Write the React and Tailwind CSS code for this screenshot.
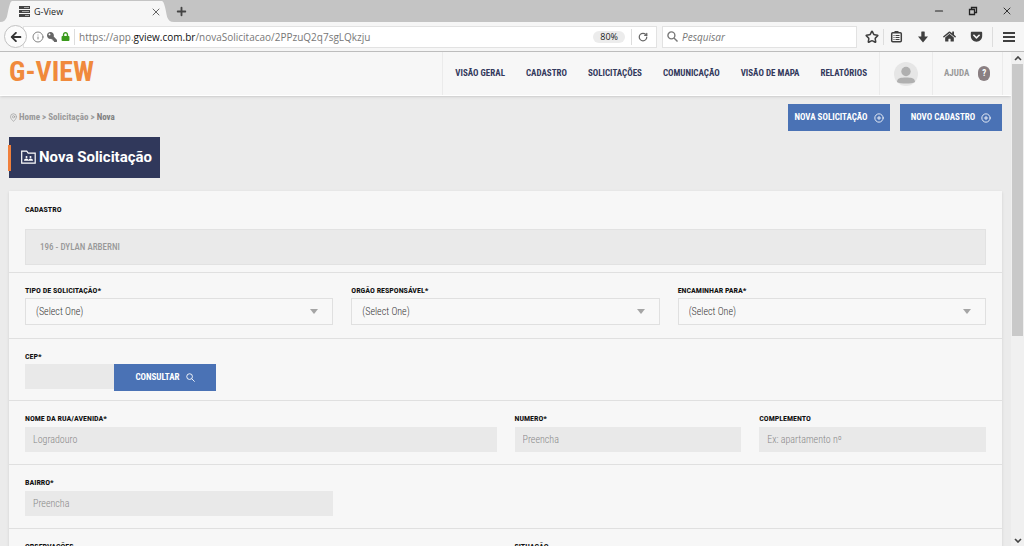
import React from "react";
import { FaArrowLeft, FaLock, FaHome, FaGetPocket, FaKey } from "react-icons/fa";
import { Info, X, Plus, RotateCw, Star, MapPin, CirclePlus, Minus } from "lucide-react";

const ui = "font-['Open_Sans','Noto_Sans',sans-serif]";
const narrow = "font-['Roboto_Condensed','Liberation_Sans_Narrow',Roboto,sans-serif]";

function Magnifier({ size = 12, strokeWidth = 1.2 }) {
  return (
    <svg width={size} height={size} viewBox="0 0 12 12" fill="none" stroke="currentColor" strokeWidth={strokeWidth} className="shrink-0" aria-hidden="true">
      <circle cx="4.800" cy="4.800" r="3.800" />
      <path d="M7.600 7.600L11.500 11.500" />
    </svg>
  );
}

function BrowserTabs() {
  return (
    <div className="flex h-[22px] shrink-0 items-stretch bg-[#c4c4c4]">
      <div className="flex w-[174px] items-stretch">
        <svg className="h-[22px] w-3 shrink-0" viewBox="0 0 12 22" aria-hidden="true">
          <path d="M0 22C8 22 7 14 9 7C10 3 11 1 12 1V22Z" fill="#f6f6f6" />
        </svg>
        <div className="mt-px flex flex-1 items-center bg-[#f6f6f6] pl-[7px]">
          <svg className="size-[11px]" viewBox="0 0 11 11" aria-hidden="true">
            <path d="M0 0h11v3H0zM0 4h11v3H0zM0 8h11v3H0z" fill="#444" />
            <path d="M5 1h5v1H5zM3 5h7v1H3zM6 9h4v1H6z" fill="#aaa" />
          </svg>
          <span className="ml-1 flex-1 text-[9px] leading-none text-[#222]">G-View</span>
          <button type="button" aria-label="Fechar aba" className="text-[#555]">
            <X size={12} strokeWidth={1.8} />
          </button>
        </div>
        <svg className="h-[22px] w-3 shrink-0" viewBox="0 0 12 22" aria-hidden="true">
          <path d="M12 22C4 22 5 14 3 7C2 3 1 1 0 1V22Z" fill="#f6f6f6" />
        </svg>
      </div>
      <button type="button" aria-label="Nova aba" className="px-px text-[#444]">
        <Plus size={13} strokeWidth={3.4} />
      </button>
      <div className="ml-auto flex items-center gap-[22px] pr-[11px] text-[#222]">
        <button type="button" aria-label="Minimizar"><Minus size={12} strokeWidth={2.4} /></button>
        <button type="button" aria-label="Restaurar">
          <svg className="size-3" viewBox="0 0 12 12" fill="none" stroke="currentColor" aria-hidden="true">
            <path d="M2.5 4.5h5v5h-5zM4.5 4V2.5h5v5H8" strokeWidth="1.3" />
          </svg>
        </button>
        <button type="button" aria-label="Fechar"><X size={12} strokeWidth={1.8} /></button>
      </div>
    </div>
  );
}

function BrowserToolbar() {
  return (
    <div className="flex h-[30px] shrink-0 items-center border-b border-[#bdbdbd] bg-[#f6f6f6] pl-1">
      <button type="button" aria-label="Voltar" className="z-10 flex size-[23px] items-center justify-center rounded-full border border-[#c2c2c2] bg-[#fbfbfb] text-[#333]">
        <FaArrowLeft size={12} />
      </button>
      <div className="-ml-1 flex h-[22px] min-w-0 flex-1 items-center border border-[#e2e2e2] bg-white pl-2">
        <Info size={12} strokeWidth={1.8} className="text-[#777]" />
        <FaKey size={10} className="ml-[3px] -scale-x-100 text-[#666]" />
        <FaLock size={9} className="ml-1 text-[#3a9a1c]" />
        <span className="ml-1 h-4 w-px bg-[#ddd]" />
        <div className="ml-1 flex-1 truncate text-[10px] leading-4 text-[#777]">
          https://app.<span className="text-[#111]">gview.com.br</span>/novaSolicitacao/2PPzuQ2q7sgLQkzju
        </div>
        <button type="button" className="rounded-full bg-[#ececec] px-[7px] text-[9px] leading-3 text-[#222]">80%</button>
        <span className="mx-[6px] h-4 w-px bg-[#ddd]" />
        <button type="button" aria-label="Recarregar" className="mr-2 text-[#666]"><RotateCw size={10} strokeWidth={3} /></button>
      </div>
      <label className="ml-[5px] flex h-[22px] w-[195px] items-center border border-[#e2e2e2] bg-white pl-1 text-[#777]">
        <Magnifier size={11} strokeWidth={1.5} />
        <input aria-label="Pesquisar" placeholder="Pesquisar" className="ml-1 w-full bg-transparent text-[10px] italic leading-4 outline-none placeholder:text-[#777]" />
      </label>
      <div className="flex items-center pl-2 text-[#3f3f3f]">
        <button type="button" aria-label="Favoritos"><Star size={14} strokeWidth={2.6} /></button>
        <span className="ml-1 h-4 w-px bg-[#ddd]" />
        <button type="button" aria-label="Biblioteca" className="ml-[6px]">
          <svg className="size-[13px]" viewBox="0 0 13 13" fill="none" stroke="currentColor" aria-hidden="true">
            <rect x="1.7" y="2.7" width="9.6" height="9" rx="1" strokeWidth="1.5" />
            <path d="M4.5 1.5h4M3.5 5.5h1M3.5 7.5h1M3.5 9.5h1M5.5 5.5h4M5.5 7.5h4M5.5 9.5h4" strokeWidth="1.2" />
          </svg>
        </button>
        <button type="button" aria-label="Downloads" className="ml-[14px]">
          <svg className="size-3" viewBox="0 0 12 12" fill="currentColor" aria-hidden="true">
            <path d="M4.300 1Q4.300 .5 4.800 .5H7.200Q7.700 .5 7.700 1V5.500H11L6 11.500L1 5.500H4.300Z" />
          </svg>
        </button>
        <button type="button" aria-label="Início" className="ml-[14px]"><FaHome size={13} /></button>
        <button type="button" aria-label="Pocket" className="ml-[14px]"><FaGetPocket size={13} /></button>
        <span className="ml-[9px] h-5 w-px bg-[#ddd]" />
        <button type="button" aria-label="Menu" className="mr-[9px] ml-[10px]">
          <svg className="size-3" viewBox="0 0 12 12" fill="currentColor" aria-hidden="true">
            <path d="M0 1h12v2H0zM0 5h12v2H0zM0 9h12v2H0z" />
          </svg>
        </button>
      </div>
    </div>
  );
}

const links = ["VISÃO GERAL", "CADASTRO", "SOLICITAÇÕES", "COMUNICAÇÃO", "VISÃO DE MAPA", "RELATÓRIOS"];

function Header() {
  return (
    <header className="flex h-[44px] items-stretch border-b border-white bg-[#f7f7f7] pr-2 pl-[9px] shadow-sm">
      <a href="#home" className={`${narrow} self-start text-[28px] leading-[40px] font-bold text-[#f08a3c]`}>G-VIEW</a>
      <nav className={`${narrow} ml-auto flex items-center gap-[21px] border-l border-[#ebebeb] px-3 text-[9px] font-bold text-[#33395c]`}>
        {links.map((l) => <a key={l} href="#nav" className="whitespace-nowrap">{l}</a>)}
      </nav>
      <button type="button" aria-label="Perfil" className="flex w-[54px] items-center justify-center border-x border-[#ebebeb]">
        <svg className="size-6" viewBox="0 0 24 24" aria-hidden="true">
          <circle cx="12" cy="12" r="12" fill="#e6e6e6" />
          <circle cx="12" cy="9.5" r="4.7" fill="#b0b0b0" />
          <path d="M3 20c0-4 4-4.500 9-4.500s9 .5 9 4.500c-3 2-15 2-18 0Z" fill="#b0b0b0" />
        </svg>
      </button>
      <a href="#ajuda" className={`${narrow} flex w-[70px] items-center gap-[9px] border-r border-[#ebebeb] pl-[11px] text-[9px] font-bold text-[#999]`}>
        AJUDA
        <span className="flex h-[15px] w-3 items-center justify-center rounded-full bg-[#8a7f82] text-white">?</span>
      </a>
    </header>
  );
}

function ActionButton({ children, icon, type = "button" }) {
  return (
    <button type={type} className={`${narrow} flex h-[27px] w-[102px] shrink-0 items-center justify-center gap-[6px] bg-[#4a72b5] text-[9px] font-bold whitespace-nowrap text-white`}>
      {children}
      {icon}
    </button>
  );
}

const labelStyle = `${narrow} block text-[8px] leading-3 font-bold text-[#111]`;
const fieldStyle = `${narrow} block h-[25px] w-full bg-[#e9e9e9] px-2 text-[10px] font-light text-[#777] outline-none placeholder:text-[#888]`;

function TextField({ id, label, placeholder, className = "" }) {
  return (
    <div className={className}>
      <label htmlFor={id} className={`${labelStyle} mb-0.5`}>{label}</label>
      <input id={id} placeholder={placeholder} className={fieldStyle} />
    </div>
  );
}

function SelectField({ id, label }) {
  return (
    <div>
      <label htmlFor={id} className={`${labelStyle} mb-px`}>{label}</label>
      <div className="relative">
        <select id={id} className={`${narrow} block h-[27px] w-full appearance-none border border-[#e0e0e0] bg-[#f8f8f8] px-[10px] text-[10px] font-light text-[#333] outline-none`}>
          <option>(Select One)</option>
        </select>
        <svg className="pointer-events-none absolute top-[11px] right-[15px] h-[5px] w-2" viewBox="0 0 8 5" aria-hidden="true">
          <path d="M0 0h8L4 5Z" fill="#a5a5a5" />
        </svg>
      </div>
    </div>
  );
}

function Row({ children, className = "pb-3" }) {
  return <div className={`border-b border-[#e0e0e0] px-4 pt-3 ${className}`}>{children}</div>;
}

function Page() {
  return (
    <div className="min-w-0 flex-1 overflow-hidden bg-[#ebebeb] font-['Roboto',sans-serif]">
      <Header />
      <main className="px-[9px] pt-2">
        <div className="flex items-start justify-between">
          <div>
            <nav aria-label="Trilha" className={`${narrow} flex h-[27px] items-center text-[9px] font-bold text-[#999]`}>
              <MapPin size={9} strokeWidth={1.8} className="mr-px" />
              <span><a href="#home">Home</a> &gt; <a href="#s">Solicitação</a> &gt; <span className="text-[#808080]">Nova</span></span>
            </nav>
            <h1 className="relative mt-[6px] flex h-[41px] items-center gap-[3px] bg-[#30385b] pr-2 pl-3 text-[15px] font-bold whitespace-nowrap text-white">
              <span className="absolute top-2 -left-px h-[26px] w-[3px] bg-[#f0803c]" />
              <svg className="size-[15px]" viewBox="0 0 15 15" fill="none" stroke="#fff" aria-hidden="true">
                <path d="M.7 1.200h5l1.500 2h7v10H.7Z" strokeWidth="1.200" />
                <circle cx="5.500" cy="7" r="1" fill="#fff" stroke="none" />
                <circle cx="9.500" cy="7" r="1" fill="#fff" stroke="none" />
                <path d="M3 10.800c0-3 4-3 4.500-.8c.5-2.200 4.500-2.200 4.500.8Z" fill="#fff" stroke="none" />
              </svg>
              Nova Solicitação
            </h1>
          </div>
          <div className="flex gap-[10px]">
            <ActionButton icon={<CirclePlus size={10} strokeWidth={2} />}>NOVA SOLICITAÇÃO</ActionButton>
            <ActionButton icon={<CirclePlus size={10} strokeWidth={2} />}>NOVO CADASTRO</ActionButton>
          </div>
        </div>

        <form className="mt-[13px] bg-[#f7f7f7] shadow-sm" onSubmit={(e) => e.preventDefault()}>
          <div className="border-b border-[#e0e0e0] px-4 pt-[13px] pb-[7px]">
            <label htmlFor="cadastro" className={`${labelStyle} mb-[13px]`}>CADASTRO</label>
            <input id="cadastro" readOnly value="196 - DYLAN ARBERNI" className={`${narrow} block h-9 w-full border border-[#e2e2e2] bg-[#eaeaea] px-[14px] text-[9px] font-medium text-[#999] outline-none`} />
          </div>
          <Row className="pb-[13px]">
            <div className="grid grid-cols-3 gap-[18px]">
              <SelectField id="tipo" label="TIPO DE SOLICITAÇÃO*" />
              <SelectField id="orgao" label="ORGÃO RESPONSÁVEL*" />
              <SelectField id="encaminhar" label="ENCAMINHAR PARA*" />
            </div>
          </Row>
          <Row className="pb-[9px]">
            <label htmlFor="cep" className={`${labelStyle} mb-px`}>CEP*</label>
            <div className="flex items-start">
              <div className="w-[89px]"><input id="cep" className={fieldStyle} /></div>
              <ActionButton icon={<Magnifier size={9} />}>CONSULTAR</ActionButton>
            </div>
          </Row>
          <Row>
            <div className="grid grid-cols-4 gap-[18px]">
              <TextField id="rua" label="NOME DA RUA/AVENIDA*" placeholder="Logradouro" className="col-span-2" />
              <TextField id="numero" label="NUMERO*" placeholder="Preencha" />
              <TextField id="complemento" label="COMPLEMENTO" placeholder="Ex: apartamento nº" />
            </div>
          </Row>
          <Row>
            <div className="grid grid-cols-3 gap-[18px]">
              <TextField id="bairro" label="BAIRRO*" placeholder="Preencha" />
            </div>
          </Row>
          <Row>
            <div className="grid grid-cols-2 gap-[18px]">
              <TextField id="observacoes" label="OBSERVAÇÕES" />
              <TextField id="situacao" label="SITUAÇÃO" />
            </div>
          </Row>
        </form>
      </main>
    </div>
  );
}

function Chevron({ down = false }) {
  return (
    <svg className="h-[5px] w-2" viewBox="0 0 8 5" fill="none" stroke="#444" strokeWidth="1.600" aria-hidden="true">
      <path d={down ? "M1 1l3 3l3-3" : "M1 4l3-3l3 3"} />
    </svg>
  );
}

export default function App() {
  return (
    <div className={`${ui} flex h-screen flex-col overflow-hidden`}>
      <BrowserTabs />
      <BrowserToolbar />
      <div className="flex min-h-0 flex-1">
        <Page />
        <div className="flex w-[13px] shrink-0 flex-col items-center bg-[#f0f0f0]">
          <div className="flex h-3 items-center"><Chevron /></div>
          <div className="h-[55%] w-[11px] bg-[#c9c9c9]" />
          <div className="mt-auto flex h-3 items-center"><Chevron down /></div>
        </div>
      </div>
    </div>
  );
}
